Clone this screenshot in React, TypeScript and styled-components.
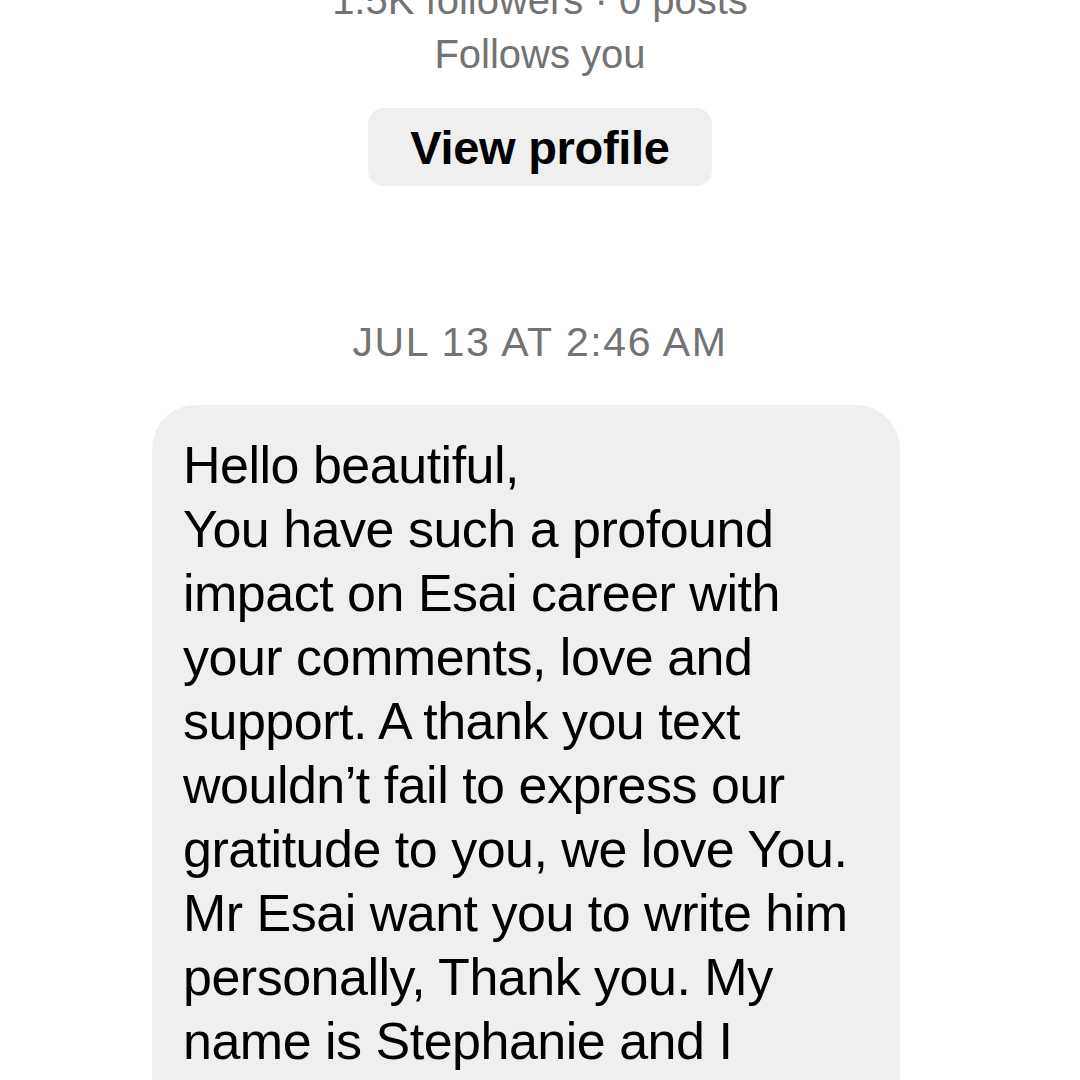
import styled, { createGlobalStyle } from 'styled-components';

const GlobalStyle = createGlobalStyle`
  html, body {
    margin: 0;
    padding: 0;
    background: #ffffff;
    height: 1080px;
    overflow: hidden;
  }
  body {
    font-family: "Liberation Sans", Arial, sans-serif;
  }
`;

const messageLines = [
  'Hello beautiful,',
  'You have such a profound',
  'impact on Esai career with',
  'your comments, love and',
  'support. A thank you text',
  'wouldn’t fail to express our',
  'gratitude to you, we love You.',
  'Mr Esai want you to write him',
  'personally, Thank you. My',
  'name is Stephanie and I',
];

export default function App() {
  return (
    <Screen>
      <GlobalStyle />
      <ProfileHeader>
        <MetaText>1.5K followers · 0 posts</MetaText>
        <MetaText>Follows you</MetaText>
        <ViewProfileButton>View profile</ViewProfileButton>
      </ProfileHeader>

      <Timestamp>JUL 13 AT 2:46 AM</Timestamp>

      <Bubble>
        {messageLines.map((line, i) => (
          <BubbleLine key={i}>{line}</BubbleLine>
        ))}
      </Bubble>
    </Screen>
  );
}

const Screen = styled.div`
  width: 1080px;
  height: 1080px;
  overflow: hidden;
  background: #ffffff;
  display: flex;
  flex-direction: column;
  align-items: center;
`;

const ProfileHeader = styled.div`
  display: flex;
  flex-direction: column;
  align-items: center;
  margin-top: -27px;
`;

const MetaText = styled.div`
  font-size: 40px;
  line-height: 54px;
  color: #737373;
  white-space: nowrap;
`;

const ViewProfileButton = styled.button`
  margin-top: 27px;
  width: 344px;
  height: 78px;
  border: none;
  border-radius: 16px;
  background: #efefef;
  color: #000000;
  font-family: "Liberation Sans", Arial, sans-serif;
  font-size: 47px;
  font-weight: 700;
  letter-spacing: -0.3px;
  padding: 0;
  cursor: pointer;
`;

const Timestamp = styled.div`
  margin-top: 132px;
  font-size: 41px;
  line-height: 48px;
  letter-spacing: 1.6px;
  color: #737373;
  white-space: nowrap;
`;

const Bubble = styled.div`
  align-self: flex-start;
  margin-top: 39px;
  margin-left: 152px;
  width: 748px;
  box-sizing: border-box;
  padding: 28px 31px 80px;
  background: #efefef;
  border-radius: 44px;
  display: flex;
  flex-direction: column;
`;

const BubbleLine = styled.div`
  font-size: 52px;
  line-height: 64px;
  letter-spacing: -0.5px;
  color: #000000;
  white-space: nowrap;
`;
